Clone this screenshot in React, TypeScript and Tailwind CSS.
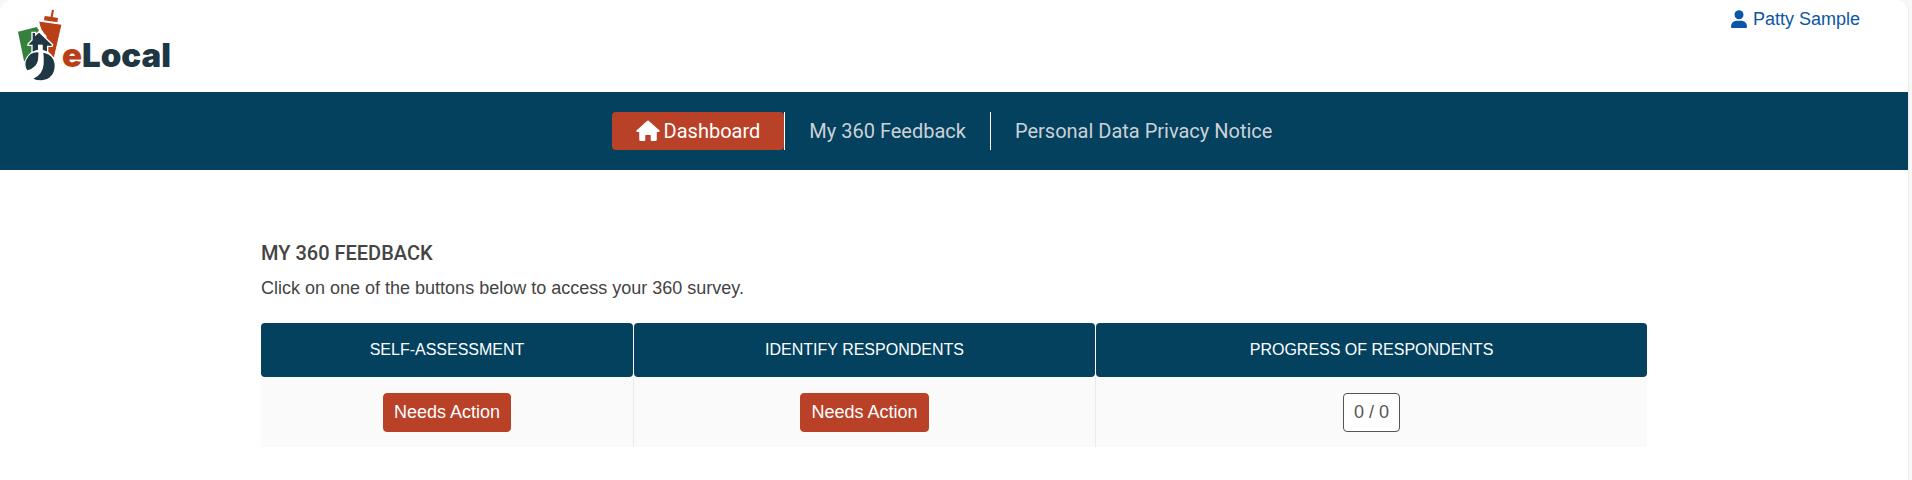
import type { ReactNode } from "react";

function Logo() {
  return (
    <a href="#" aria-label="eLocal" className="flex w-fit items-end">
      <svg viewBox="24 12 132 216" className="h-[72px] w-11" aria-hidden="true">
        {/* buildings */}
        <path d="M24 80 L80 66 L86 74 L92 158 L42 168 Z" fill="#35803d" />
        <path
          d="M86 48 L156 58 L133 158 L108 158 L108 92 Q90 78 86 48 Z"
          fill="#b93f16"
          stroke="#fff"
          strokeWidth="3"
        />
        <path d="M104 33 L122 35 L126 14 L132 15 L128 36 L144 39 L142 52 L102 46 Z" fill="#b93f16" />
        {/* house */}
        <path
          d="M66 82 H77 V89 L87 80 L128 119 L126 124 H113 V160 H66 V121 H54 L54 117 L66 105 Z"
          fill="#1f3643"
          stroke="#fff"
          strokeWidth="4"
        />
        <path d="M84 119 H98 V160 H84 Z" fill="#fff" />
        {/* leaf and globe */}
        <circle cx="90" cy="181" r="47" fill="#fff" />
        <path d="M86 142 Q60 140 49 164 Q42 180 52 196 Q64 194 76 182 Q86 172 86 142 Z" fill="#1f3643" />
        <path
          d="M100 143 Q134 150 134 184 Q132 222 94 226 Q78 226 70 221 Q98 210 101 178 Q102 158 100 143 Z"
          fill="#1f3643"
        />
        <path d="M84 122 H97 V146 Q103 194 64 222 L58 214 Q88 188 86 146 Z" fill="#fff" />
      </svg>
      <span className="pb-1.5 font-['Inter',sans-serif] text-[33px] font-black leading-10 text-[#1f3643]">
        <span className="text-[#b93f16]">e</span>Local
      </span>
    </a>
  );
}

function UserIcon() {
  return (
    <svg viewBox="0 0 16 18" className="h-[18px] w-4" fill="currentColor" aria-hidden="true">
      <circle cx="8" cy="4.7" r="4.5" />
      <path d="M5 10.8 H11 Q16 11.5 16 17 Q16 18 15 18 H1 Q0 18 0 17 Q0 11.5 5 10.8 Z" />
    </svg>
  );
}

function HomeIcon() {
  return (
    <svg viewBox="0 0 24 22" className="h-[22px] w-6" fill="currentColor" aria-hidden="true">
      <path d="M12 0.3 L23.6 10.5 Q24 12 22.6 12 H20.8 V19.5 Q20.8 21 19.3 21 H15.4 Q14.7 21 14.7 20.3 V15 H9.3 V20.3 Q9.3 21 8.6 21 H4.7 Q3.2 21 3.2 19.5 V12 H1.4 Q0 12 0.4 10.5 L11 0.9 Q12 0 13 0.9 Z" />
    </svg>
  );
}

function HeadCell({ children, className }: { children: ReactNode; className: string }) {
  return (
    <th scope="col" className={`border-white bg-white p-0 font-normal ${className}`}>
      <div className="rounded bg-[#03415f] py-[15px] text-base leading-6 text-white">{children}</div>
    </th>
  );
}

function ActionButton() {
  return (
    <button
      type="button"
      className="rounded border border-[#b84128] bg-[#b84128] px-2.5 py-[5px] text-lg leading-[27px] text-white"
    >
      Needs Action
    </button>
  );
}

export default function App() {
  return (
    <div className="bg-[#f7f7f7] pr-[3px]">
      <div className="min-h-screen rounded-t-xl border-r border-[#ececec] bg-white font-['Liberation_Sans',Arial,sans-serif] text-[#444]">
        <header className="flex h-[92px] items-start justify-between pl-[18px] pr-12 pt-[9px]">
          <Logo />
          <a href="#" className="flex items-center gap-1.5 text-lg leading-5 text-[#0b56a7]">
            <UserIcon />
            Patty Sample
          </a>
        </header>

        <nav className="flex justify-center bg-[#03415f] py-5 font-['Roboto',sans-serif] text-xl leading-[38px] text-[#ccd1d6]">
          <a
            href="#"
            aria-current="page"
            className="flex items-center gap-1 rounded bg-[#b84128] px-6 text-white"
          >
            <HomeIcon />
            Dashboard
          </a>
          <a href="#" className="border-x border-white px-6">
            My 360 Feedback
          </a>
          <a href="#" className="px-6">
            Personal Data Privacy Notice
          </a>
        </nav>

        <main className="mx-auto max-w-[1386px] pt-[68px]">
          <h1 className="font-['Roboto',sans-serif] text-xl font-medium leading-[30px]">MY 360 FEEDBACK</h1>
          <p className="mt-1.5 text-lg leading-7">
            Click on one of the buttons below to access your 360 survey.
          </p>

          <table className="mt-[21px] w-full table-fixed border-separate border-spacing-0 text-center">
            <thead>
              <tr>
                <HeadCell className="w-[373px] border-r">SELF-ASSESSMENT</HeadCell>
                <HeadCell className="w-1/3 border-r">IDENTIFY RESPONDENTS</HeadCell>
                <HeadCell className="w-auto">PROGRESS OF RESPONDENTS</HeadCell>
              </tr>
            </thead>
            <tbody>
              <tr className="bg-[#fafafa]">
                <td className="h-[70px] border-r border-[#ebebeb]">
                  <ActionButton />
                </td>
                <td className="border-r border-[#ebebeb]">
                  <ActionButton />
                </td>
                <td>
                  <span className="inline-block rounded border border-[#555] bg-white px-2.5 py-[5px] text-lg leading-[27px] text-[#555]">
                    0 / 0
                  </span>
                </td>
              </tr>
            </tbody>
          </table>
        </main>
      </div>
    </div>
  );
}
